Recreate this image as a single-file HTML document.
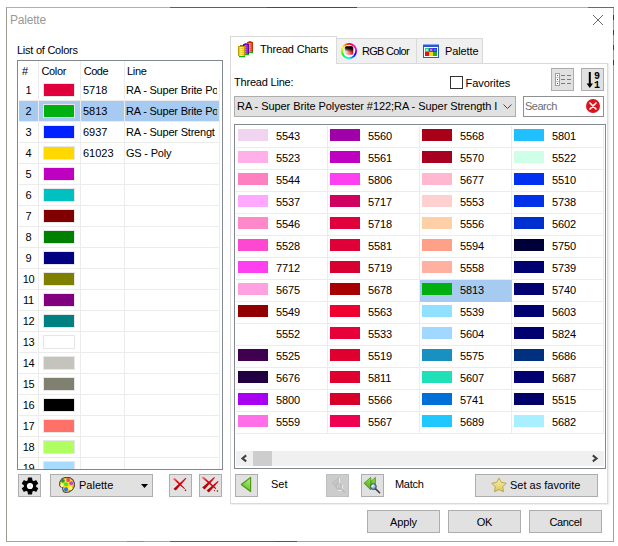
<!DOCTYPE html>
<html><head><meta charset="utf-8"><title>Palette</title>
<style>
html,body{margin:0;padding:0;background:#fff;}
body{width:618px;height:546px;position:relative;overflow:hidden;font-family:"Liberation Sans",sans-serif;font-size:11px;color:#000;}
.abs,.t,.btn,.sw,.hl,.vl{position:absolute;}
.t{white-space:nowrap;line-height:13px;height:13px;}
.btn{background:#e1e1e1;border:1px solid #adadad;box-sizing:border-box;}
.hl{height:1px;background:#ececec;}
.vl{width:1px;background:#ececec;}
.sw{box-sizing:border-box;width:32px;height:14px;border:1px solid #e6e6e6;}
.gs{position:absolute;width:30px;height:12px;}
</style></head><body>

<div class="abs" style="left:6px;top:7px;width:608px;height:535px;box-sizing:border-box;border:1px solid #9c9a92;border-top-color:#b0b0b0;border-bottom-color:#a8a69c;border-right-color:#a0a0a0;"></div>
<div class="abs" style="left:170px;top:7px;width:97px;height:1px;background:#2f6f8c;"></div>
<div class="abs" style="left:170px;top:541px;width:105px;height:1px;background:#2f6f8c;"></div>
<div class="abs" style="left:275px;top:541px;width:22px;height:1px;background:#555;"></div>
<div class="abs" style="left:127px;top:541px;width:17px;height:1px;background:#8c8c8c;"></div>
<div class="abs" style="left:267px;top:7px;width:90px;height:1px;background:#4a4a4a;"></div>
<div class="abs" style="left:588px;top:7px;width:26px;height:1px;background:#6a6a6a;"></div>
<div class="abs" style="left:613px;top:15px;width:1px;height:5px;background:#6a2060;"></div><div class="abs" style="left:613px;top:20px;width:1px;height:1px;background:#d89030;"></div><div class="abs" style="left:613px;top:30px;width:1px;height:5px;background:#6a2060;"></div><div class="abs" style="left:613px;top:35px;width:1px;height:1px;background:#d89030;"></div><div class="abs" style="left:613px;top:45px;width:1px;height:5px;background:#6a2060;"></div><div class="abs" style="left:613px;top:50px;width:1px;height:1px;background:#d89030;"></div><div class="abs" style="left:613px;top:60px;width:1px;height:5px;background:#6a2060;"></div><div class="abs" style="left:613px;top:65px;width:1px;height:1px;background:#d89030;"></div>
<div class="t" style="left:10px;top:13px;font-size:12px;line-height:15px;height:15px;color:#999;letter-spacing:-0.2px;">Palette</div>
<svg class="abs" style="left:592px;top:14px;" width="12" height="12" viewBox="0 0 12 12"><path d="M1 1 L11 11 M11 1 L1 11" stroke="#6a6a6a" stroke-width="1" fill="none"/></svg>
<div class="t" style="left:17px;top:44px;letter-spacing:-0.25px;">List of Colors</div>
<div class="abs" style="left:17px;top:60px;width:206px;height:410px;box-sizing:border-box;border:1px solid #828790;background:#fff;overflow:hidden;">
<div class="abs" style="left:1px;top:40px;width:200px;height:20px;background:#a6caf0;"></div>
<div class="hl" style="left:1px;top:39px;width:201px;"></div>
<div class="hl" style="left:1px;top:60px;width:201px;"></div>
<div class="hl" style="left:1px;top:81px;width:201px;"></div>
<div class="hl" style="left:1px;top:102px;width:201px;"></div>
<div class="hl" style="left:1px;top:123px;width:201px;"></div>
<div class="hl" style="left:1px;top:144px;width:201px;"></div>
<div class="hl" style="left:1px;top:165px;width:201px;"></div>
<div class="hl" style="left:1px;top:186px;width:201px;"></div>
<div class="hl" style="left:1px;top:207px;width:201px;"></div>
<div class="hl" style="left:1px;top:228px;width:201px;"></div>
<div class="hl" style="left:1px;top:249px;width:201px;"></div>
<div class="hl" style="left:1px;top:270px;width:201px;"></div>
<div class="hl" style="left:1px;top:291px;width:201px;"></div>
<div class="hl" style="left:1px;top:312px;width:201px;"></div>
<div class="hl" style="left:1px;top:333px;width:201px;"></div>
<div class="hl" style="left:1px;top:354px;width:201px;"></div>
<div class="hl" style="left:1px;top:375px;width:201px;"></div>
<div class="hl" style="left:1px;top:396px;width:201px;"></div>
<div class="vl" style="left:20px;top:0;height:408px;"></div>
<div class="vl" style="left:62px;top:0;height:408px;"></div>
<div class="vl" style="left:106px;top:0;height:408px;"></div>
<div class="vl" style="left:201px;top:19px;height:390px;"></div>
<div class="t" style="left:4px;top:4px;letter-spacing:0px;">#</div>
<div class="t" style="left:23.5px;top:4px;letter-spacing:-0.35px;">Color</div>
<div class="t" style="left:65.8px;top:4px;letter-spacing:-0.5px;">Code</div>
<div class="t" style="left:109px;top:4px;letter-spacing:-0.3px;">Line</div>
<div class="t" style="left:1px;width:19px;text-align:center;top:23px;letter-spacing:0;">1</div>
<div class="sw" style="left:25px;top:22px;background:#e0003c;"></div>
<div class="t" style="left:65px;top:23px;">5718</div>
<div class="t" style="left:108px;top:23px;width:91px;overflow:hidden;letter-spacing:-0.2px;">RA - Super Brite Po</div>
<div class="t" style="left:1px;width:19px;text-align:center;top:44px;letter-spacing:0;">2</div>
<div class="sw" style="left:25px;top:43px;background:#00b010;"></div>
<div class="t" style="left:65px;top:44px;">5813</div>
<div class="t" style="left:108px;top:44px;width:91px;overflow:hidden;letter-spacing:-0.2px;">RA - Super Brite Po</div>
<div class="t" style="left:1px;width:19px;text-align:center;top:65px;letter-spacing:0;">3</div>
<div class="sw" style="left:25px;top:64px;background:#0020ff;"></div>
<div class="t" style="left:65px;top:65px;">6937</div>
<div class="t" style="left:108px;top:65px;width:91px;overflow:hidden;letter-spacing:-0.2px;">RA - Super Strengt</div>
<div class="t" style="left:1px;width:19px;text-align:center;top:86px;letter-spacing:0;">4</div>
<div class="sw" style="left:25px;top:85px;background:#ffd800;"></div>
<div class="t" style="left:65px;top:86px;">61023</div>
<div class="t" style="left:108px;top:86px;width:91px;overflow:hidden;letter-spacing:-0.2px;">GS - Poly</div>
<div class="t" style="left:1px;width:19px;text-align:center;top:107px;letter-spacing:0;">5</div>
<div class="sw" style="left:25px;top:106px;background:#c000c0;"></div>
<div class="t" style="left:1px;width:19px;text-align:center;top:128px;letter-spacing:0;">6</div>
<div class="sw" style="left:25px;top:127px;background:#00c0c0;"></div>
<div class="t" style="left:1px;width:19px;text-align:center;top:149px;letter-spacing:0;">7</div>
<div class="sw" style="left:25px;top:148px;background:#800000;"></div>
<div class="t" style="left:1px;width:19px;text-align:center;top:170px;letter-spacing:0;">8</div>
<div class="sw" style="left:25px;top:169px;background:#008000;"></div>
<div class="t" style="left:1px;width:19px;text-align:center;top:191px;letter-spacing:0;">9</div>
<div class="sw" style="left:25px;top:190px;background:#000080;"></div>
<div class="t" style="left:1px;width:19px;text-align:center;top:212px;letter-spacing:-0.3px;">10</div>
<div class="sw" style="left:25px;top:211px;background:#808000;"></div>
<div class="t" style="left:1px;width:19px;text-align:center;top:233px;letter-spacing:-0.3px;">11</div>
<div class="sw" style="left:25px;top:232px;background:#800080;"></div>
<div class="t" style="left:1px;width:19px;text-align:center;top:254px;letter-spacing:-0.3px;">12</div>
<div class="sw" style="left:25px;top:253px;background:#008080;"></div>
<div class="t" style="left:1px;width:19px;text-align:center;top:275px;letter-spacing:-0.3px;">13</div>
<div class="sw" style="left:25px;top:274px;background:#ffffff;"></div>
<div class="t" style="left:1px;width:19px;text-align:center;top:296px;letter-spacing:-0.3px;">14</div>
<div class="sw" style="left:25px;top:295px;background:#c4c4bc;"></div>
<div class="t" style="left:1px;width:19px;text-align:center;top:317px;letter-spacing:-0.3px;">15</div>
<div class="sw" style="left:25px;top:316px;background:#808070;"></div>
<div class="t" style="left:1px;width:19px;text-align:center;top:338px;letter-spacing:-0.3px;">16</div>
<div class="sw" style="left:25px;top:337px;background:#000000;"></div>
<div class="t" style="left:1px;width:19px;text-align:center;top:359px;letter-spacing:-0.3px;">17</div>
<div class="sw" style="left:25px;top:358px;background:#ff7068;"></div>
<div class="t" style="left:1px;width:19px;text-align:center;top:380px;letter-spacing:-0.3px;">18</div>
<div class="sw" style="left:25px;top:379px;background:#b0ff60;"></div>
<div class="t" style="left:1px;width:19px;text-align:center;top:401px;letter-spacing:-0.3px;">19</div>
<div class="sw" style="left:25px;top:400px;background:#a8dcff;"></div>
</div>
<div class="btn" style="left:18px;top:474px;width:23px;height:23px;"></div>
<svg class="abs" style="left:18px;top:474px;" width="23" height="23" viewBox="0 0 23 23"><path d="M10.15 6.61 L10.41 4.16 L13.59 4.16 L13.85 6.61 L15.75 7.70 L18.00 6.70 L19.58 9.46 L17.59 10.90 L17.59 13.10 L19.58 14.54 L18.00 17.30 L15.75 16.30 L13.85 17.39 L13.59 19.84 L10.41 19.84 L10.15 17.39 L8.25 16.30 L6.00 17.30 L4.42 14.54 L6.41 13.10 L6.41 10.90 L4.42 9.46 L6.00 6.70 L8.25 7.70Z" fill="#000" stroke="#000" stroke-width="1.1" stroke-linejoin="round"/><circle cx="12" cy="12" r="3.1" fill="#fff"/><rect x="11.3" y="11.5" width="1.6" height="1.2" fill="#ccc"/></svg>
<div class="btn" style="left:50px;top:474px;width:103px;height:23px;"></div>
<div class="t" style="left:79px;top:479px;">Palette</div>
<svg class="abs" style="left:59px;top:477px;" width="16" height="16" viewBox="0 0 16 16"><defs><linearGradient id="pg" x1="0" y1="0" x2="1" y2="1"><stop offset="0" stop-color="#fff020"/><stop offset="0.6" stop-color="#ffd800"/><stop offset="1" stop-color="#d8a000"/></linearGradient></defs><path d="M3 1.8 L6 0.6 L11 0.6 L14 3 L15.4 6 L15.4 9.5 L13.5 12.5 L10 15 L6.5 15.4 L4.5 14.5 L3.6 12 L3.8 10.3 L1.5 9.8 L0.6 8 L0.8 5 Z" fill="url(#pg)" stroke="#4a4a4a" stroke-width="1.1" stroke-linejoin="round"/><circle cx="2.9" cy="8.6" r="1.3" fill="#fff"/><circle cx="3.9" cy="3.8" r="1.9" fill="#1c9a3c"/><circle cx="9.2" cy="3" r="1.9" fill="#f03c8c"/><circle cx="12.2" cy="6.2" r="1.9" fill="#c040f0"/><circle cx="7" cy="7.2" r="2" fill="#40e040"/><circle cx="7" cy="12.2" r="2" fill="#3070f0"/><circle cx="11.3" cy="11.2" r="2.1" fill="#fff870"/></svg>
<svg class="abs" style="left:141px;top:484px;" width="7" height="4" viewBox="0 0 7 4"><path d="M0 0 H7 L3.5 4 Z" fill="#000"/></svg>
<div class="btn" style="left:169px;top:474px;width:23px;height:23px;"></div>
<div class="btn" style="left:199px;top:474px;width:23px;height:23px;"></div>
<svg class="abs" style="left:169px;top:474px;" width="23" height="23" viewBox="0 0 23 23"><defs><linearGradient id="rx169" x1="0" y1="0" x2="1" y2="1"><stop offset="0" stop-color="#ff9aa0"/><stop offset="0.35" stop-color="#e80010"/><stop offset="1" stop-color="#a00000"/></linearGradient><linearGradient id="ry169" x1="1" y1="0" x2="0" y2="1"><stop offset="0" stop-color="#f00010"/><stop offset="1" stop-color="#a80000"/></linearGradient></defs><path d="M3.8 4.9 L5.6 3.7 L16 14.4 L15.3 15.1 Z" fill="url(#rx169)"/><circle cx="16.5" cy="16.3" r="0.8" fill="#900"/><path d="M16.6 3.8 L17.4 4.5 L6.8 16.6 L4.4 14.9 Z" fill="url(#ry169)"/></svg>
<svg class="abs" style="left:199px;top:474px;" width="23" height="23" viewBox="0 0 23 23"><defs><linearGradient id="rx199" x1="0" y1="0" x2="1" y2="1"><stop offset="0" stop-color="#ff9aa0"/><stop offset="0.35" stop-color="#e80010"/><stop offset="1" stop-color="#a00000"/></linearGradient><linearGradient id="ry199" x1="1" y1="0" x2="0" y2="1"><stop offset="0" stop-color="#f00010"/><stop offset="1" stop-color="#a80000"/></linearGradient></defs><path d="M2.4 3.6 L4.4 2.4 L17.2 14.2 L16.4 15 Z" fill="url(#rx199)"/><circle cx="18.4" cy="17" r="0.8" fill="#900"/><circle cx="15.4" cy="16.6" r="0.6" fill="#b00"/><path d="M15.2 3 L16 3.8 L5.6 15.4 L3.2 13.6 Z" fill="url(#ry199)"/><path d="M18.8 7 L19.6 7.8 L9.8 18.4 L7.6 16.6 Z" fill="url(#ry199)"/></svg>
<div class="abs" style="left:230px;top:63px;width:378px;height:441px;box-sizing:border-box;border:1px solid #dadada;background:#fff;box-shadow:1px 1px 0 #efefef,2px 0 0 #f6f6f6;"></div>
<div class="abs" style="left:337px;top:38px;width:146px;height:25px;box-sizing:border-box;border:1px solid #d9d9d9;border-left:none;border-bottom:none;background:#f0f0f0;"></div>
<div class="vl" style="left:416px;top:39px;height:24px;background:#d9d9d9;"></div>
<div class="abs" style="left:230px;top:36px;width:107px;height:28px;box-sizing:border-box;border:1px solid #d9d9d9;border-bottom:none;background:#fff;"></div>
<div class="t" style="left:260px;top:43px;letter-spacing:-0.18px;">Thread Charts</div>
<svg class="abs" style="left:238px;top:40px;" width="17" height="18" viewBox="0 0 17 18"><rect x="10.5" y="1" width="3" height="1" fill="#10b010"/><rect x="10" y="12" width="5" height="1.2" fill="#10b010"/><rect x="9" y="2" width="6" height="10" fill="#c83000"/><rect x="10" y="3" width="4" height="9" fill="#f05828"/><rect x="11" y="3" width="1.5" height="9" fill="#ff9878"/><rect x="10" y="4.2" width="4" height="0.7" fill="#c83000" opacity="0.45"/><rect x="10" y="6.2" width="4" height="0.7" fill="#c83000" opacity="0.45"/><rect x="10" y="8.2" width="4" height="0.7" fill="#c83000" opacity="0.45"/><rect x="10" y="10.2" width="4" height="0.7" fill="#c83000" opacity="0.45"/><rect x="6.5" y="3" width="3" height="1" fill="#10b010"/><rect x="6" y="14" width="5" height="1.2" fill="#10b010"/><rect x="5" y="4" width="6" height="10" fill="#6800a8"/><rect x="6" y="5" width="4" height="9" fill="#a020f0"/><rect x="7" y="5" width="1.5" height="9" fill="#c468ff"/><rect x="6" y="6.2" width="4" height="0.7" fill="#6800a8" opacity="0.45"/><rect x="6" y="8.2" width="4" height="0.7" fill="#6800a8" opacity="0.45"/><rect x="6" y="10.2" width="4" height="0.7" fill="#6800a8" opacity="0.45"/><rect x="6" y="12.2" width="4" height="0.7" fill="#6800a8" opacity="0.45"/><rect x="2.0" y="5" width="3" height="1" fill="#10b010"/><rect x="1" y="16" width="6" height="1.2" fill="#10b010"/><rect x="0" y="6" width="7" height="10" fill="#c09800"/><rect x="1" y="7" width="5" height="9" fill="#f8d818"/><rect x="2" y="7" width="2.5" height="9" fill="#fff060"/><rect x="1" y="8.2" width="5" height="0.7" fill="#c09800" opacity="0.45"/><rect x="1" y="10.2" width="5" height="0.7" fill="#c09800" opacity="0.45"/><rect x="1" y="12.2" width="5" height="0.7" fill="#c09800" opacity="0.45"/><rect x="1" y="14.2" width="5" height="0.7" fill="#c09800" opacity="0.45"/></svg>
<div class="abs" style="left:341px;top:43px;width:16px;height:16px;border-radius:50%;background:conic-gradient(#f00,#f0f,#00f,#0ff,#0f0,#ff0,#f00);"></div><svg class="abs" style="left:340px;top:42px;" width="18" height="18" viewBox="0 0 18 18"><defs><linearGradient id="rg1" x1="0" y1="0" x2="1" y2="0"><stop offset="0" stop-color="#fff"/><stop offset="1" stop-color="#f00"/></linearGradient><linearGradient id="rg2" x1="0" y1="1" x2="0.2" y2="0"><stop offset="0" stop-color="#000" stop-opacity="0"/><stop offset="0.4" stop-color="#000" stop-opacity="0.05"/><stop offset="0.8" stop-color="#000" stop-opacity="0.9"/><stop offset="1" stop-color="#000" stop-opacity="1"/></linearGradient></defs><circle cx="9" cy="9" r="6.2" fill="#fbfbfb"/><rect x="4.8" y="4.3" width="8.4" height="8.4" rx="1.5" fill="url(#rg1)"/><rect x="4.8" y="4.3" width="8.4" height="8.4" rx="1.5" fill="url(#rg2)"/></svg>
<svg class="abs" style="left:423px;top:44px;" width="16" height="14" viewBox="0 0 16 14"><rect x="0" y="0" width="16" height="14" fill="#2858d8"/><rect x="0" y="0" width="16" height="1" fill="#88a8f0"/><rect x="1" y="3" width="14" height="10" fill="#fff"/><rect x="2" y="4" width="4" height="4" fill="#20d080"/><rect x="6" y="4" width="4" height="4" fill="#8030e0"/><rect x="10" y="4" width="4" height="4" fill="#1040f0"/><rect x="2" y="8" width="4" height="4" fill="#e01020"/><rect x="6" y="8" width="4" height="4" fill="#f8d800"/><rect x="10" y="8" width="4" height="4" fill="#20b020"/><rect x="3" y="5" width="2" height="2" fill="#a0ffd0"/><rect x="7" y="5" width="2" height="2" fill="#b080ff"/><rect x="11" y="5" width="2" height="2" fill="#3080ff"/></svg>
<div class="t" style="left:362px;top:45px;letter-spacing:-0.7px;">RGB Color</div>
<div class="t" style="left:445px;top:45px;letter-spacing:-0.1px;">Palette</div>
<div class="t" style="left:234px;top:76px;letter-spacing:-0.2px;">Thread Line:</div>
<div class="abs" style="left:450px;top:76px;width:13px;height:13px;box-sizing:border-box;border:1px solid #333;background:#fff;"></div>
<div class="t" style="left:465.5px;top:77px;letter-spacing:-0.05px;">Favorites</div>
<div class="btn" style="left:551px;top:68px;width:23px;height:23px;"></div>
<div class="btn" style="left:581px;top:68px;width:23px;height:23px;"></div>
<svg class="abs" style="left:551px;top:68px;" width="23" height="23" viewBox="0 0 23 23"><rect x="4.5" y="5.5" width="4" height="12" fill="#fff" stroke="#a0a0a0" stroke-width="1"/><rect x="5" y="9" width="3" height="1" fill="#c8c8c8"/><rect x="5" y="13" width="3" height="1" fill="#c8c8c8"/><rect x="6" y="7" width="1" height="1" fill="#207050"/><rect x="6" y="11" width="1" height="1" fill="#2060f0"/><rect x="6" y="15" width="1" height="1" fill="#e01010"/><rect x="10" y="7" width="4" height="1" fill="#7a7a7a"/><rect x="16" y="7" width="4" height="1" fill="#7a7a7a"/><rect x="10" y="11" width="4" height="1" fill="#7a7a7a"/><rect x="16" y="11" width="4" height="1" fill="#7a7a7a"/><rect x="10" y="15" width="4" height="1" fill="#7a7a7a"/><rect x="16" y="15" width="4" height="1" fill="#7a7a7a"/></svg>
<svg class="abs" style="left:581px;top:68px;" width="23" height="23" viewBox="0 0 23 23"><rect x="7.8" y="4" width="2" height="13" fill="#000"/><path d="M5.6 15.6 H12 L8.8 20 Z" fill="#000"/><text x="13" y="10.6" font-family="Liberation Mono, monospace" font-weight="bold" font-size="10" fill="#000">9</text><text x="13" y="19.6" font-family="Liberation Mono, monospace" font-weight="bold" font-size="10" fill="#000">1</text></svg>
<div class="btn" style="left:234px;top:96px;width:282px;height:21px;"></div>
<div class="t" style="left:237px;top:100px;width:263px;overflow:hidden;letter-spacing:-0.06px;">RA - Super Brite Polyester #122;RA - Super Strength I</div>
<svg class="abs" style="left:503px;top:104px;" width="9" height="6" viewBox="0 0 9 6"><path d="M0.5 0.5 L4.5 4.5 L8.5 0.5" stroke="#444" stroke-width="1" fill="none"/></svg>
<div class="abs" style="left:523px;top:96px;width:81px;height:21px;box-sizing:border-box;border:1px solid #8f8f8f;background:#fff;"></div>
<div class="t" style="left:525px;top:100px;color:#6d6d6d;letter-spacing:-0.5px;">Search</div>
<svg class="abs" style="left:586px;top:99px;" width="14" height="14" viewBox="0 0 14 14"><circle cx="7" cy="7" r="7" fill="#d9141e"/><path d="M4 4 L10 10 M10 4 L4 10" stroke="#fff" stroke-width="1.6" stroke-linecap="round"/></svg>
<div class="abs" style="left:234px;top:124px;width:372px;height:345px;box-sizing:border-box;border:1px solid #828790;background:#fff;overflow:hidden;">
<div class="abs" style="left:185px;top:155px;width:92px;height:22px;background:#a6caf0;"></div>
<div class="hl" style="left:1px;top:22px;width:368px;"></div>
<div class="hl" style="left:1px;top:44px;width:368px;"></div>
<div class="hl" style="left:1px;top:66px;width:368px;"></div>
<div class="hl" style="left:1px;top:88px;width:368px;"></div>
<div class="hl" style="left:1px;top:110px;width:368px;"></div>
<div class="hl" style="left:1px;top:132px;width:368px;"></div>
<div class="hl" style="left:1px;top:154px;width:368px;"></div>
<div class="hl" style="left:1px;top:176px;width:368px;"></div>
<div class="hl" style="left:1px;top:198px;width:368px;"></div>
<div class="hl" style="left:1px;top:220px;width:368px;"></div>
<div class="hl" style="left:1px;top:242px;width:368px;"></div>
<div class="hl" style="left:1px;top:264px;width:368px;"></div>
<div class="hl" style="left:1px;top:286px;width:368px;"></div>
<div class="hl" style="left:1px;top:308px;width:368px;"></div>
<div class="vl" style="left:92px;top:1px;height:308px;"></div>
<div class="vl" style="left:184px;top:1px;height:308px;"></div>
<div class="vl" style="left:276px;top:1px;height:308px;"></div>
<div class="vl" style="left:368px;top:1px;height:308px;"></div>
<div class="abs" style="left:185px;top:155px;width:92px;height:22px;background:#a6caf0;"></div>
<div class="gs" style="left:3px;top:4px;background:#f0d4f0;"></div>
<div class="t" style="left:41px;top:5px;letter-spacing:-0.12px;">5543</div>
<div class="gs" style="left:3px;top:26px;background:#ffb0e8;"></div>
<div class="t" style="left:41px;top:27px;letter-spacing:-0.12px;">5523</div>
<div class="gs" style="left:3px;top:48px;background:#ff80c0;"></div>
<div class="t" style="left:41px;top:49px;letter-spacing:-0.12px;">5544</div>
<div class="gs" style="left:3px;top:70px;background:#ffa8ff;"></div>
<div class="t" style="left:41px;top:71px;letter-spacing:-0.12px;">5537</div>
<div class="gs" style="left:3px;top:92px;background:#ff88c8;"></div>
<div class="t" style="left:41px;top:93px;letter-spacing:-0.12px;">5546</div>
<div class="gs" style="left:3px;top:114px;background:#ff48d0;"></div>
<div class="t" style="left:41px;top:115px;letter-spacing:-0.12px;">5528</div>
<div class="gs" style="left:3px;top:136px;background:#ff40f0;"></div>
<div class="t" style="left:41px;top:137px;letter-spacing:-0.12px;">7712</div>
<div class="gs" style="left:3px;top:158px;background:#ffa0e0;"></div>
<div class="t" style="left:41px;top:159px;letter-spacing:-0.12px;">5675</div>
<div class="gs" style="left:3px;top:180px;background:#900000;"></div>
<div class="t" style="left:41px;top:181px;letter-spacing:-0.12px;">5549</div>
<div class="gs" style="left:3px;top:202px;background:#ffffff;"></div>
<div class="t" style="left:41px;top:203px;letter-spacing:-0.12px;">5552</div>
<div class="gs" style="left:3px;top:224px;background:#400050;"></div>
<div class="t" style="left:41px;top:225px;letter-spacing:-0.12px;">5525</div>
<div class="gs" style="left:3px;top:246px;background:#200040;"></div>
<div class="t" style="left:41px;top:247px;letter-spacing:-0.12px;">5676</div>
<div class="gs" style="left:3px;top:268px;background:#a800f0;"></div>
<div class="t" style="left:41px;top:269px;letter-spacing:-0.12px;">5800</div>
<div class="gs" style="left:3px;top:290px;background:#ff70e8;"></div>
<div class="t" style="left:41px;top:291px;letter-spacing:-0.12px;">5559</div>
<div class="gs" style="left:95px;top:4px;background:#a000a8;"></div>
<div class="t" style="left:133px;top:5px;letter-spacing:-0.12px;">5560</div>
<div class="gs" style="left:95px;top:26px;background:#c000c0;"></div>
<div class="t" style="left:133px;top:27px;letter-spacing:-0.12px;">5561</div>
<div class="gs" style="left:95px;top:48px;background:#ff40f0;"></div>
<div class="t" style="left:133px;top:49px;letter-spacing:-0.12px;">5806</div>
<div class="gs" style="left:95px;top:70px;background:#d00060;"></div>
<div class="t" style="left:133px;top:71px;letter-spacing:-0.12px;">5717</div>
<div class="gs" style="left:95px;top:92px;background:#e0003c;"></div>
<div class="t" style="left:133px;top:93px;letter-spacing:-0.12px;">5718</div>
<div class="gs" style="left:95px;top:114px;background:#e00038;"></div>
<div class="t" style="left:133px;top:115px;letter-spacing:-0.12px;">5581</div>
<div class="gs" style="left:95px;top:136px;background:#d80030;"></div>
<div class="t" style="left:133px;top:137px;letter-spacing:-0.12px;">5719</div>
<div class="gs" style="left:95px;top:158px;background:#a80000;"></div>
<div class="t" style="left:133px;top:159px;letter-spacing:-0.12px;">5678</div>
<div class="gs" style="left:95px;top:180px;background:#f00030;"></div>
<div class="t" style="left:133px;top:181px;letter-spacing:-0.12px;">5563</div>
<div class="gs" style="left:95px;top:202px;background:#e80038;"></div>
<div class="t" style="left:133px;top:203px;letter-spacing:-0.12px;">5533</div>
<div class="gs" style="left:95px;top:224px;background:#e00030;"></div>
<div class="t" style="left:133px;top:225px;letter-spacing:-0.12px;">5519</div>
<div class="gs" style="left:95px;top:246px;background:#e00030;"></div>
<div class="t" style="left:133px;top:247px;letter-spacing:-0.12px;">5811</div>
<div class="gs" style="left:95px;top:268px;background:#d80028;"></div>
<div class="t" style="left:133px;top:269px;letter-spacing:-0.12px;">5566</div>
<div class="gs" style="left:95px;top:290px;background:#f00050;"></div>
<div class="t" style="left:133px;top:291px;letter-spacing:-0.12px;">5567</div>
<div class="gs" style="left:187px;top:4px;background:#a80018;"></div>
<div class="t" style="left:225px;top:5px;letter-spacing:-0.12px;">5568</div>
<div class="gs" style="left:187px;top:26px;background:#a80020;"></div>
<div class="t" style="left:225px;top:27px;letter-spacing:-0.12px;">5570</div>
<div class="gs" style="left:187px;top:48px;background:#ffb8d0;"></div>
<div class="t" style="left:225px;top:49px;letter-spacing:-0.12px;">5677</div>
<div class="gs" style="left:187px;top:70px;background:#ffd0d0;"></div>
<div class="t" style="left:225px;top:71px;letter-spacing:-0.12px;">5553</div>
<div class="gs" style="left:187px;top:92px;background:#ffd0a8;"></div>
<div class="t" style="left:225px;top:93px;letter-spacing:-0.12px;">5556</div>
<div class="gs" style="left:187px;top:114px;background:#ffa088;"></div>
<div class="t" style="left:225px;top:115px;letter-spacing:-0.12px;">5594</div>
<div class="gs" style="left:187px;top:136px;background:#ffb0a0;"></div>
<div class="t" style="left:225px;top:137px;letter-spacing:-0.12px;">5558</div>
<div class="gs" style="left:187px;top:158px;background:#00b010;"></div>
<div class="t" style="left:225px;top:159px;letter-spacing:-0.12px;">5813</div>
<div class="gs" style="left:187px;top:180px;background:#90e0ff;"></div>
<div class="t" style="left:225px;top:181px;letter-spacing:-0.12px;">5539</div>
<div class="gs" style="left:187px;top:202px;background:#a0d8ff;"></div>
<div class="t" style="left:225px;top:203px;letter-spacing:-0.12px;">5604</div>
<div class="gs" style="left:187px;top:224px;background:#1890c0;"></div>
<div class="t" style="left:225px;top:225px;letter-spacing:-0.12px;">5575</div>
<div class="gs" style="left:187px;top:246px;background:#20e0b8;"></div>
<div class="t" style="left:225px;top:247px;letter-spacing:-0.12px;">5607</div>
<div class="gs" style="left:187px;top:268px;background:#0070d8;"></div>
<div class="t" style="left:225px;top:269px;letter-spacing:-0.12px;">5741</div>
<div class="gs" style="left:187px;top:290px;background:#20c8ff;"></div>
<div class="t" style="left:225px;top:291px;letter-spacing:-0.12px;">5689</div>
<div class="gs" style="left:279px;top:4px;background:#20c0ff;"></div>
<div class="t" style="left:317px;top:5px;letter-spacing:-0.12px;">5801</div>
<div class="gs" style="left:279px;top:26px;background:#d0ffe8;"></div>
<div class="t" style="left:317px;top:27px;letter-spacing:-0.12px;">5522</div>
<div class="gs" style="left:279px;top:48px;background:#0030f0;"></div>
<div class="t" style="left:317px;top:49px;letter-spacing:-0.12px;">5510</div>
<div class="gs" style="left:279px;top:70px;background:#0030e8;"></div>
<div class="t" style="left:317px;top:71px;letter-spacing:-0.12px;">5738</div>
<div class="gs" style="left:279px;top:92px;background:#0030d0;"></div>
<div class="t" style="left:317px;top:93px;letter-spacing:-0.12px;">5602</div>
<div class="gs" style="left:279px;top:114px;background:#000038;"></div>
<div class="t" style="left:317px;top:115px;letter-spacing:-0.12px;">5750</div>
<div class="gs" style="left:279px;top:136px;background:#000070;"></div>
<div class="t" style="left:317px;top:137px;letter-spacing:-0.12px;">5739</div>
<div class="gs" style="left:279px;top:158px;background:#000070;"></div>
<div class="t" style="left:317px;top:159px;letter-spacing:-0.12px;">5740</div>
<div class="gs" style="left:279px;top:180px;background:#000070;"></div>
<div class="t" style="left:317px;top:181px;letter-spacing:-0.12px;">5603</div>
<div class="gs" style="left:279px;top:202px;background:#000070;"></div>
<div class="t" style="left:317px;top:203px;letter-spacing:-0.12px;">5824</div>
<div class="gs" style="left:279px;top:224px;background:#003080;"></div>
<div class="t" style="left:317px;top:225px;letter-spacing:-0.12px;">5686</div>
<div class="gs" style="left:279px;top:246px;background:#000070;"></div>
<div class="t" style="left:317px;top:247px;letter-spacing:-0.12px;">5687</div>
<div class="gs" style="left:279px;top:268px;background:#000068;"></div>
<div class="t" style="left:317px;top:269px;letter-spacing:-0.12px;">5515</div>
<div class="gs" style="left:279px;top:290px;background:#a8f0ff;"></div>
<div class="t" style="left:317px;top:291px;letter-spacing:-0.12px;">5682</div>
<div class="abs" style="left:1px;top:326px;width:368px;height:15px;background:#f0f0f0;"></div>
<div class="abs" style="left:18px;top:326px;width:19px;height:15px;background:#cdcdcd;"></div>
<svg class="abs" style="left:5px;top:329px;" width="8" height="9" viewBox="0 0 8 9"><path d="M6.2 1.4 L2.4 4.4 L6.2 7.4" stroke="#404040" stroke-width="2" fill="none"/></svg>
<svg class="abs" style="left:356px;top:329px;" width="8" height="9" viewBox="0 0 8 9"><path d="M1.8 1.4 L5.6 4.4 L1.8 7.4" stroke="#404040" stroke-width="2" fill="none"/></svg>
</div>
<div class="btn" style="left:235px;top:474px;width:23px;height:23px;"></div>
<svg class="abs" style="left:235px;top:474px;" width="23" height="23" viewBox="0 0 23 23"><defs><linearGradient id="gt" x1="0.8" y1="0" x2="0.4" y2="1"><stop offset="0" stop-color="#b4f088"/><stop offset="1" stop-color="#62b81c"/></linearGradient></defs><path d="M6.3 10.5 L15.6 3.4 V17.6 Z" fill="url(#gt)" stroke="#4c9c10" stroke-width="1.2" stroke-linejoin="round"/></svg>
<div class="t" style="left:271px;top:478px;">Set</div>
<div class="btn" style="left:326px;top:474px;width:23px;height:23px;background:#cccccc;border-color:#bfbfbf;"></div>
<div class="btn" style="left:361px;top:474px;width:23px;height:23px;"></div>
<svg class="abs" style="left:326px;top:474px;" width="23" height="23" viewBox="0 0 23 23"><path d="M5.6 9.2 L13.2 3.4 V15 Z" fill="#c4c4c4" stroke="#bcbcbc" stroke-width="0.8"/><rect x="13" y="4" width="1" height="6" fill="#e8e8e8"/><rect x="16" y="11" width="1" height="4" fill="#e8e8e8"/><rect x="12" y="16" width="4" height="1" fill="#e8e8e8"/><circle cx="12.6" cy="12.2" r="2.8" fill="#c8c8c8" stroke="#b4b4b4" stroke-width="0.8"/><path d="M15 14.6 L19 18.6" stroke="#b8b8b8" stroke-width="1.2"/></svg>
<svg class="abs" style="left:361px;top:474px;" width="23" height="23" viewBox="0 0 23 23"><defs><linearGradient id="gm" x1="0.8" y1="0" x2="0.4" y2="1"><stop offset="0" stop-color="#90e050"/><stop offset="1" stop-color="#48a810"/></linearGradient><radialGradient id="lens" cx="0.35" cy="0.35" r="0.7"><stop offset="0" stop-color="#fff"/><stop offset="1" stop-color="#3878d8"/></radialGradient></defs><path d="M8 9.2 L14.4 3.4 V16 Z" fill="url(#gm)" stroke="#3c9408" stroke-width="0.8" stroke-linejoin="round"/><path d="M3 9.2 L9.8 3.4 V16 Z" fill="url(#gm)" stroke="#3c9408" stroke-width="0.8" stroke-linejoin="round"/><path d="M14.4 14.6 L18.6 18.8" stroke="#404040" stroke-width="1.6" stroke-linecap="round"/><circle cx="12.4" cy="12.6" r="2.9" fill="url(#lens)" stroke="#505050" stroke-width="1"/></svg>
<div class="t" style="left:395px;top:478px;letter-spacing:-0.3px;">Match</div>
<div class="btn" style="left:475px;top:474px;width:123px;height:23px;"></div>
<svg class="abs" style="left:490px;top:476px;" width="18" height="18" viewBox="0 0 18 18"><defs><linearGradient id="st" x1="0" y1="0" x2="0" y2="1"><stop offset="0" stop-color="#f8f0b0"/><stop offset="1" stop-color="#e0c858"/></linearGradient></defs><path d="M9.00 2.00 L11.29 6.44 L16.23 7.25 L12.71 10.81 L13.47 15.75 L9.00 13.50 L4.53 15.75 L5.29 10.81 L1.77 7.25 L6.71 6.44Z" fill="url(#st)" stroke="#b8a848" stroke-width="1" stroke-linejoin="round"/></svg>
<div class="t" style="left:510px;top:479px;">Set as favorite</div>
<div class="btn" style="left:367px;top:510px;width:73px;height:23px;"></div>
<div class="t" style="left:367px;width:73px;text-align:center;top:516px;letter-spacing:-0.1px;">Apply</div>
<div class="btn" style="left:448px;top:510px;width:73px;height:23px;"></div>
<div class="t" style="left:448px;width:73px;text-align:center;top:516px;letter-spacing:-0.1px;">OK</div>
<div class="btn" style="left:529px;top:510px;width:73px;height:23px;"></div>
<div class="t" style="left:529px;width:73px;text-align:center;top:516px;letter-spacing:-0.35px;">Cancel</div>
</body></html>
